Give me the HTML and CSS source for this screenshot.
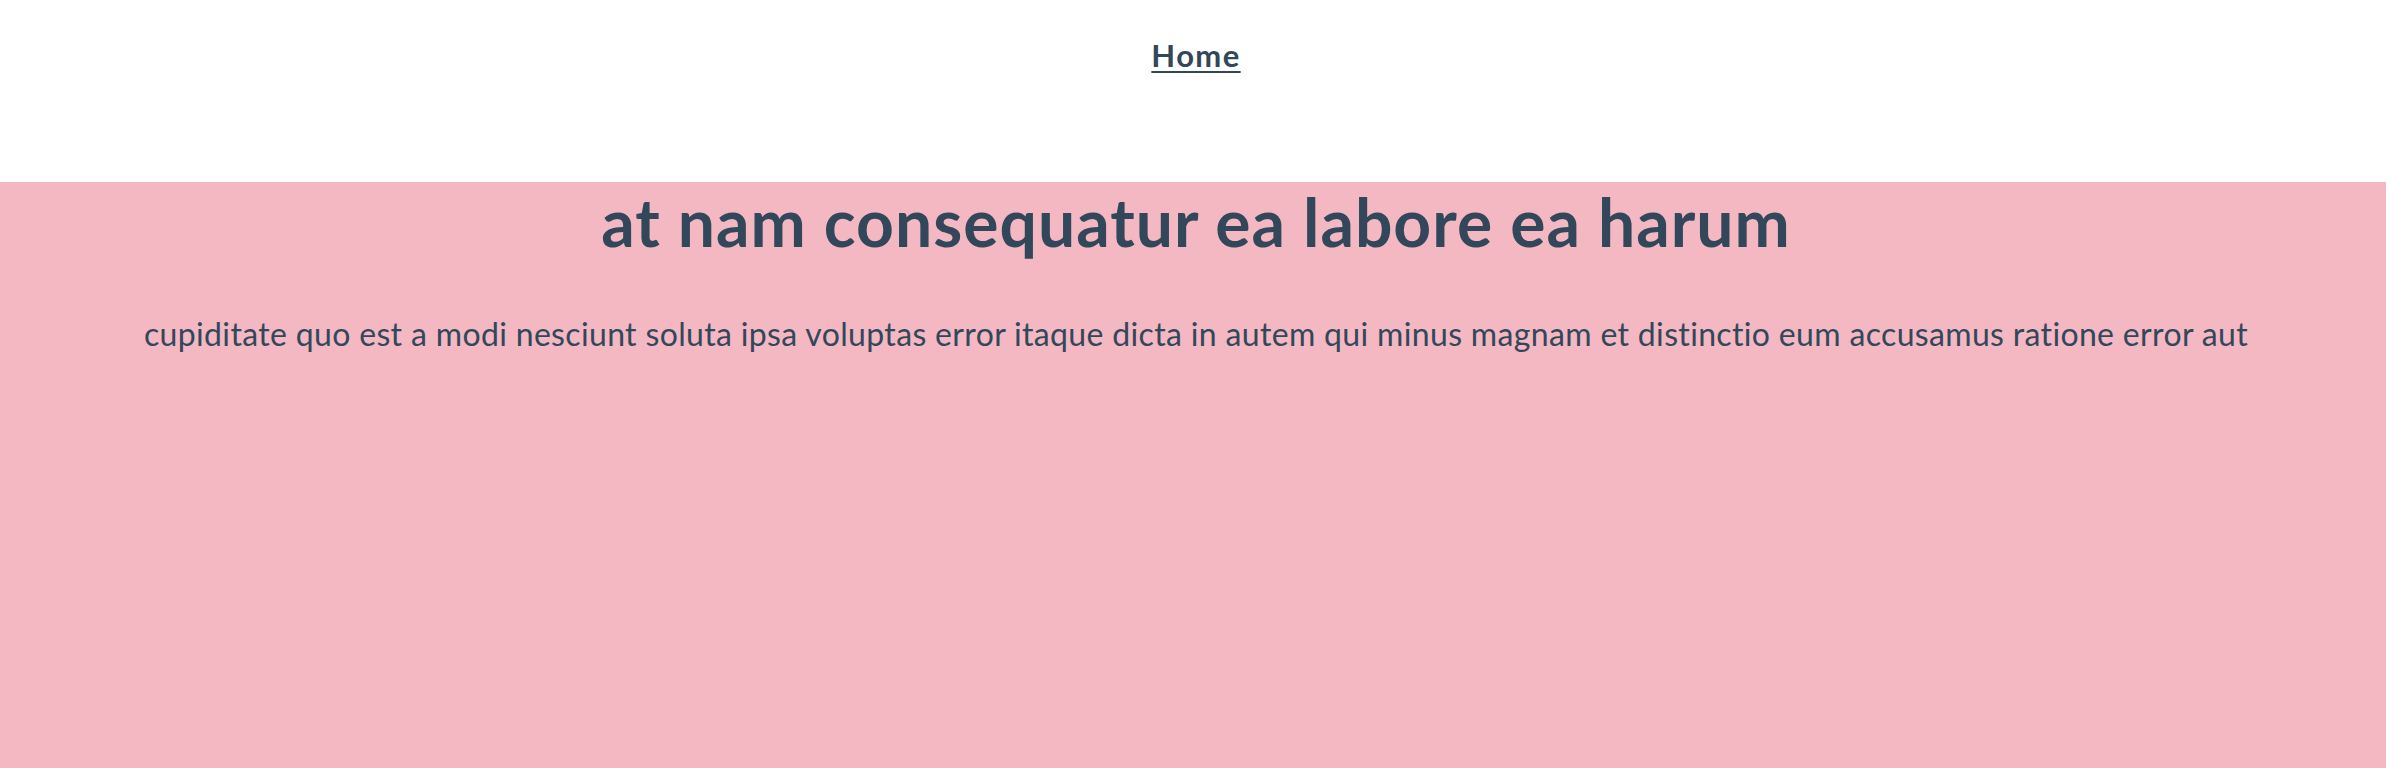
FILE: index.html
```html
<!DOCTYPE html>
<html lang="la">
<head>
<meta charset="utf-8">
<title>Home</title>
<link rel="stylesheet" href="styles.css">
</head>
<body>
<header class="site-header">
  <nav class="menu">
    <a class="menu-link" href="#">Home</a>
  </nav>
</header>
<main class="hero">
  <h1 class="hero-title">at nam consequatur ea labore ea harum</h1>
  <p class="hero-text">cupiditate quo est a modi nesciunt soluta ipsa voluptas error itaque dicta in autem qui minus magnam et distinctio eum accusamus ratione error aut</p>
</main>
</body>
</html>
```
FILE: styles.css
```css
* { box-sizing: border-box; }
html, body {
  margin: 0;
  padding: 0;
  height: 100%;
}
body {
  font-family: Lato, "Open Sans", sans-serif;
  color: #33475b;
  background: #ffffff;
  display: flex;
  flex-direction: column;
}
.site-header {
  height: 182px;
  padding-top: 37px;
  padding-left: 6px;
  display: flex;
  justify-content: center;
  align-items: flex-start;
}
.menu-link {
  font-size: 31px;
  line-height: 1.2;
  font-weight: 700;
  letter-spacing: 1.4px;
  color: #33475b;
  text-decoration: underline;
  text-decoration-thickness: 2px;
  text-underline-offset: 4px;
}
.hero {
  flex: 1;
  background: #f4b8c2;
  padding: 0 20px 0 26px;
  text-align: center;
}
.hero-title {
  margin: 0;
  font-size: 66px;
  line-height: 1.2;
  font-weight: 700;
  letter-spacing: 1px;
}
.hero-text {
  margin: 54px 0 0;
  font-size: 32px;
  line-height: 1.2;
  font-weight: 400;
  letter-spacing: 0.34px;
}
```
